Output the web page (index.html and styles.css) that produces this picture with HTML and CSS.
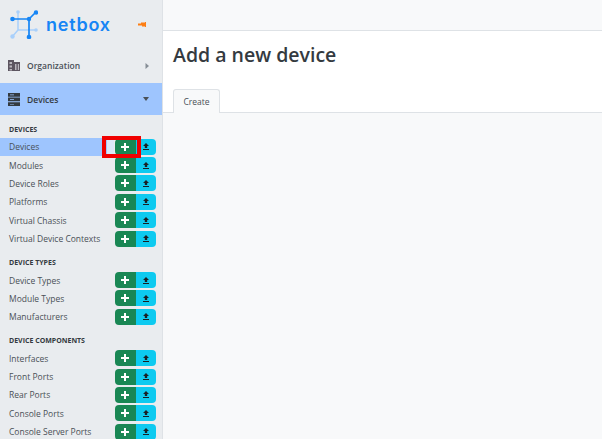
FILE: index.html
```html
<!DOCTYPE html>
<html lang="en">
<head>
    <meta charset="UTF-8">
    <title>Add a new device</title>
    <link rel="stylesheet" href="styles.css">
</head>
<body>
    <div class="page">
        <nav class="sidebar">
            <div class="brand">
                <svg class="logo" width="28" height="29" viewBox="0 0 28 29">
                    <g fill="none" stroke-width="1.5" stroke="#a9d0fb">
                        <path d="M8 2V20M2 27L8 20H26"/>
                    </g>
                    <circle cx="8" cy="2" r="1.8" fill="#a9d0fb"/>
                    <circle cx="2.5" cy="26.5" r="2.2" fill="#a9d0fb"/>
                    <circle cx="26" cy="20" r="1.8" fill="#a9d0fb"/>
                    <path d="M2 9H19M19 9L26 2M19 9V27" fill="none" stroke-width="1.7" stroke="#1685f5"/>
                    <circle cx="2.5" cy="9" r="2.3" fill="#1685f5"/>
                    <circle cx="19" cy="9" r="2.2" fill="#1685f5"/>
                    <circle cx="26" cy="2.5" r="2.2" fill="#1685f5"/>
                    <circle cx="19" cy="27" r="2.3" fill="#1685f5"/>
                </svg>
                <span class="brand-name">netbox</span>
                <svg class="pin" width="8" height="5" viewBox="0 0 8 5">
                    <path d="M0 1.5H3V0.5H7V0H8V5H7V4.5H4V3.5H0Z" fill="#fd7e14"/>
                </svg>
            </div>

            <div class="menu-head">
                <svg class="menu-icon" width="12" height="11" viewBox="0 0 12 11">
                    <path d="M0 0H6V2H12V11H0Z" fill="#5c5560"/>
                    <path d="M1.5 2H4V4H1.5ZM1.5 5.5H4V7.5H1.5ZM1.5 9H4V10.5H1.5ZM7 4H8.5V10H7ZM9.8 4H11V10H9.8Z" fill="#b9b6bd"/>
                </svg>
                <span class="menu-label">Organization</span>
                <svg class="caret" width="4" height="6" viewBox="0 0 4 6"><path d="M0.5 0L4 3L0.5 6Z" fill="#868e96"/></svg>
            </div>
            <div class="menu-head active">
                <svg class="menu-icon" width="12" height="13" viewBox="0 0 12 13">
                    <path d="M0 0H12V3.7H0ZM0 4.6H12V8.3H0ZM0 9.3H12V13H0Z" fill="#343a40"/>
                    <path d="M2 1.6H6V2.3H2ZM2 6.2H6V6.9H2ZM2 10.9H6V11.6H2Z" fill="#9ec5fe"/>
                </svg>
                <span class="menu-label">Devices</span>
                <svg class="caret" width="6" height="4" viewBox="0 0 6 4"><path d="M0 0H6L3 4Z" fill="#495057"/></svg>
            </div>

            <div class="group" id="groups"></div>
        </nav>

        <main class="content">
            <div class="topbar"></div>
            <div class="header">
                <h1>Add a new device</h1>
                <div class="tabs"><span class="tab">Create</span></div>
            </div>
            <div class="body"></div>
        </main>
    </div>
    <div class="marker"></div>

    <script>
        const groups = [
            ['Devices', ['Devices', 'Modules', 'Device Roles', 'Platforms', 'Virtual Chassis', 'Virtual Device Contexts']],
            ['Device Types', ['Device Types', 'Module Types', 'Manufacturers']],
            ['Device Components', ['Interfaces', 'Front Ports', 'Rear Ports', 'Console Ports', 'Console Server Ports']]
        ];

        const plus = '<svg width="8" height="8" viewBox="0 0 8 8"><path d="M3 0H5V3H8V5H5V8H3V5H0V3H3Z" fill="#fff"/></svg>';
        const upload = '<svg width="6" height="7" viewBox="0 0 6 7"><path d="M3 0L6 3H4.2V5H1.8V3H0ZM0 6H6V7H0Z" fill="#1a1f24"/></svg>';

        let html = '';
        groups.forEach(([title, items], g) => {
            html += `<div class="group-title">${title}</div>`;
            items.forEach((item, i) => {
                const cls = g === 0 && i === 0 ? 'item selected' : 'item';
                html += `<div class="${cls}"><span class="item-name">${item}</span>` +
                    `<span class="btns"><span class="btn add">${plus}</span><span class="btn import">${upload}</span></span></div>`;
            });
        });
        document.getElementById('groups').innerHTML = html;
    </script>
</body>
</html>
```

FILE: styles.css
```css
html, body {
    margin: 0;
    height: 100%;
    overflow: hidden;
}

body {
    font-family: "Open Sans", "Noto Sans", sans-serif;
    background-color: #f8f9fa;
    color: #343a40;
}

.page {
    display: flex;
    height: 439px;
}

.sidebar {
    width: 162px;
    flex: none;
    background-color: #e9ecef;
    border-right: 1px solid #dee2e6;
    overflow: hidden;
}

.brand {
    height: 48px;
    display: flex;
    align-items: center;
    padding-left: 10px;
    box-sizing: border-box;
}

.brand-name {
    margin-left: 8px;
    font-family: "Inter", sans-serif;
    font-size: 18px;
    font-weight: 600;
    letter-spacing: 0.8px;
    color: #1685f5;
}

.pin {
    margin-left: 27px;
}

.menu-head {
    height: 35px;
    display: flex;
    align-items: center;
    padding: 0 13px 0 8px;
    box-sizing: border-box;
    font-size: 8.5px;
    font-weight: 600;
    color: #495057;
}

.menu-head.active {
    height: 32px;
    background-color: #9ec5fe;
    color: #343a40;
}

.menu-icon {
    margin-right: 7px;
}

.menu-label {
    flex: 1;
}

.group-title {
    height: 16px;
    margin-top: 6.5px;
    padding-left: 9px;
    line-height: 16px;
    font-size: 7px;
    font-weight: 700;
    text-transform: uppercase;
    color: #343a40;
}

.item + .group-title {
    margin-top: 7px;
}

.item {
    height: 18.4px;
    display: flex;
    align-items: center;
    padding: 0 6px 0 9px;
    font-size: 8.5px;
    color: #495057;
}

.item.selected {
    background: linear-gradient(to right, #9ec5fe 107px, #dbe8f8 107px, #dbe8f8 114px, #e9ecef 114px);
}

.item-name {
    flex: 1;
}

.btns {
    display: flex;
    height: 16px;
    width: 41px;
    border-radius: 4px;
    overflow: hidden;
}

.btn {
    flex: 1;
    display: flex;
    align-items: center;
    justify-content: center;
}

.add {
    background-color: #198754;
}

.import {
    background-color: #0dcaf0;
}

.content {
    flex: 1;
    display: flex;
    flex-direction: column;
}

.topbar {
    height: 30px;
    flex: none;
    background-color: #f8f9fa;
    border-bottom: 1px solid #dee2e6;
}

.header {
    height: 81px;
    flex: none;
    display: flex;
    flex-direction: column;
    justify-content: space-between;
    padding-left: 10px;
    background-color: #fff;
    border-bottom: 1px solid #dee2e6;
}

h1 {
    margin: 11px 0 0;
    font-size: 19.5px;
    line-height: 26px;
    font-weight: 600;
    color: #343a40;
}

.tabs {
    display: flex;
    margin-bottom: -1px;
}

.tab {
    width: 47px;
    height: 24px;
    box-sizing: border-box;
    background-color: #f8f9fa;
    border: 1px solid #dee2e6;
    border-bottom: none;
    border-radius: 3px 3px 0 0;
    font-size: 8.5px;
    line-height: 24px;
    text-align: center;
    color: #495057;
}

.body {
    flex: 1;
    background-color: #f8f9fa;
}

/* red annotation around the add button */
.marker {
    position: absolute;
    left: 102px;
    top: 136px;
    width: 39px;
    height: 22px;
    box-sizing: border-box;
    border: 4px solid #f00000;
}
```
